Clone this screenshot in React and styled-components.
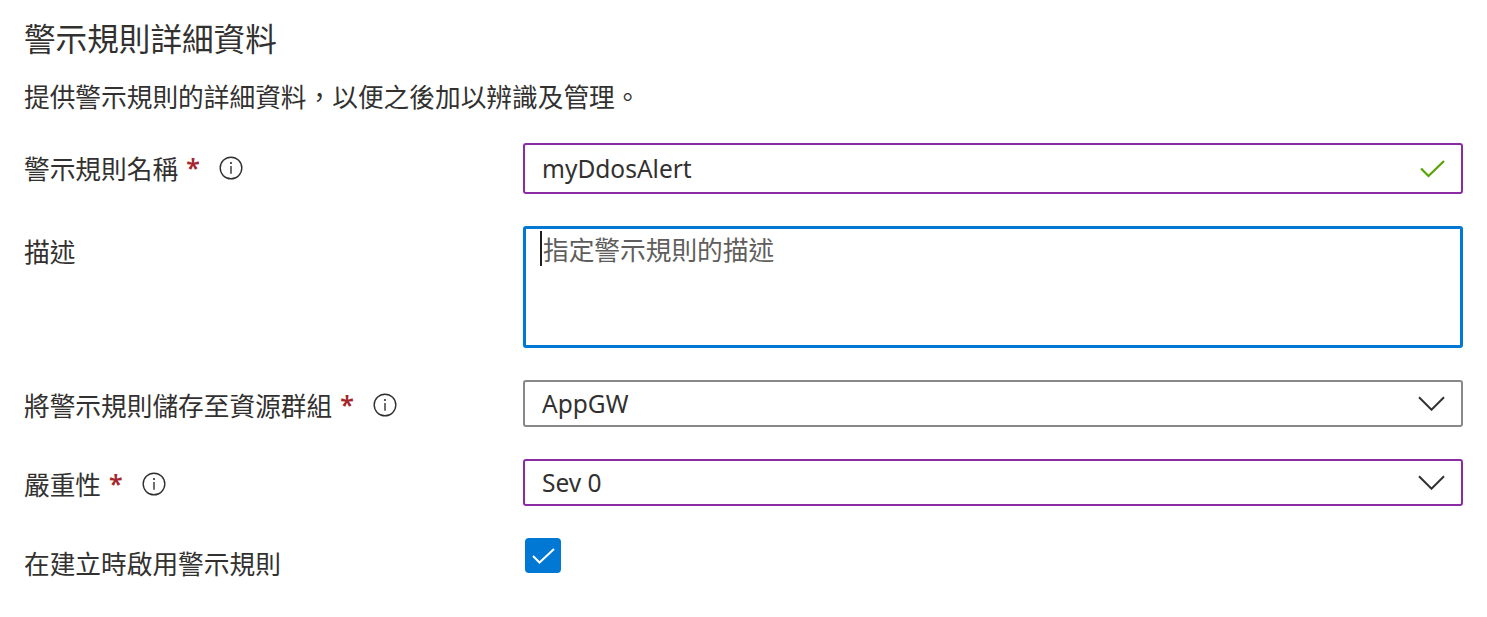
import React from "react";
import styled, { createGlobalStyle } from "styled-components";

const GlobalStyle = createGlobalStyle`
  html, body {
    margin: 0;
    padding: 0;
    background: #ffffff;
  }
  body {
    font-family: "Noto Sans", "Noto Sans CJK TC", sans-serif;
    color: #323130;
  }
`;

const cjk = `"Noto Sans CJK TC", "Noto Sans", sans-serif`;
const latin = `"Noto Sans", "Noto Sans CJK TC", sans-serif`;

const Page = styled.div`
  padding: 17px 24px 24px 24px;
`;

const Title = styled.h2`
  margin: 0;
  font-family: ${cjk};
  font-size: 31.6px;
  line-height: 40px;
  font-weight: 400;
  color: #323130;
`;

const Intro = styled.p`
  margin: 21px 0 0 0;
  font-family: ${cjk};
  font-size: 25.7px;
  line-height: 36px;
  color: #323130;
`;

const Form = styled.div`
  margin-top: 29px;
  display: grid;
  grid-template-columns: 499px 1fr;
  row-gap: 32px;
  align-items: start;
`;

const Label = styled.div`
  padding-top: 7px;
  display: flex;
  align-items: center;
  font-family: ${cjk};
  font-size: 25.7px;
  line-height: 36px;
  color: #323130;
`;

const Required = styled.span`
  color: #a4262c;
  font-family: ${latin};
  font-size: 25px;
  font-weight: 600;
  margin-left: 8px;
  line-height: 1;
  position: relative;
  top: -1px;
`;

const InfoIcon = styled.span`
  display: inline-flex;
  margin-left: 19px;
  color: #323130;
`;

const Field = styled.div`
  position: relative;
  box-sizing: border-box;
  height: ${(p) => p.$h}px;
  border: 2px solid ${(p) => p.$border};
  border-radius: 3px;
  display: flex;
  align-items: center;
  padding: 0 16px 0 17px;
  font-family: ${latin};
  font-size: 24.5px;
  color: #323130;
  background: #ffffff;
`;

const FieldText = styled.span`
  flex: 1;
`;

const TextAreaBox = styled.div`
  position: relative;
  height: 122px;
`;

const TextArea = styled.textarea`
  display: block;
  box-sizing: border-box;
  width: 100%;
  height: 100%;
  border: 3px solid #0078d4;
  border-radius: 3px;
  padding: 4px 16px 4px 17px;
  resize: none;
  outline: none;
  font-family: ${cjk};
  font-size: 25.7px;
  line-height: 32px;
  color: #323130;
  &::placeholder {
    color: #605e5c;
  }
`;

const Caret = styled.span`
  position: absolute;
  left: 17px;
  top: 5px;
  width: 2px;
  height: 35px;
  background: #201f1e;
`;

const Check = styled.div`
  width: 36px;
  height: 35px;
  margin: 0 0 0 2px;
  border-radius: 4px;
  background: #0078d4;
  display: flex;
  align-items: center;
  justify-content: center;
`;

const Info = () => (
  <InfoIcon>
    <svg width="24" height="24" viewBox="0 0 24 24" fill="none">
      <circle cx="12" cy="12" r="10.8" stroke="#323130" strokeWidth="1.4" />
      <circle cx="12" cy="7" r="1.1" fill="#323130" />
      <path d="M12 10v7.8" stroke="#323130" strokeWidth="1.4" />
    </svg>
  </InfoIcon>
);

const Chevron = () => (
  <svg width="27" height="15" viewBox="0 0 27 15" fill="none">
    <path d="M1 1.2l12.5 12.5L26 1.2" stroke="#323130" strokeWidth="2" />
  </svg>
);

const ValidTick = () => (
  <svg width="25" height="18" viewBox="0 0 25 18" fill="none">
    <path d="M1 8.5l7.5 7.5L24 1" stroke="#57a300" strokeWidth="2.2" />
  </svg>
);

const FieldLabel = ({ text, required, info }) => (
  <Label>
    {text}
    {required && <Required>*</Required>}
    {info && <Info />}
  </Label>
);

const App = () => {
  return (
    <Page>
      <GlobalStyle />
      <Title>警示規則詳細資料</Title>
      <Intro>提供警示規則的詳細資料，以便之後加以辨識及管理。</Intro>
      <Form>
        <FieldLabel text="警示規則名稱" required info />
        <Field $h={51} $border="#8a2da5">
          <FieldText>myDdosAlert</FieldText>
          <ValidTick />
        </Field>

        <FieldLabel text="描述" />
        <TextAreaBox>
          <TextArea placeholder="指定警示規則的描述" />
          <Caret />
        </TextAreaBox>

        <FieldLabel text="將警示規則儲存至資源群組" required info />
        <Field $h={47} $border="#8a8886">
          <FieldText>AppGW</FieldText>
          <Chevron />
        </Field>

        <FieldLabel text="嚴重性" required info />
        <Field $h={47} $border="#8a2da5">
          <FieldText>Sev 0</FieldText>
          <Chevron />
        </Field>

        <FieldLabel text="在建立時啟用警示規則" />
        <Check>
          <svg width="23" height="16" viewBox="0 0 23 16" fill="none">
            <path d="M1 8l6.5 6.5L22 1" stroke="#ffffff" strokeWidth="2" />
          </svg>
        </Check>
      </Form>
    </Page>
  );
};

export default App;
